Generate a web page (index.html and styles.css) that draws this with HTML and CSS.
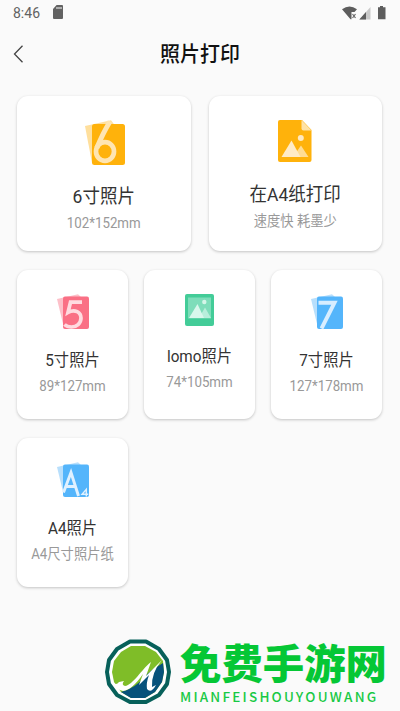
FILE: index.html
```html
<!DOCTYPE html>
<html lang="zh-CN">
<head>
<meta charset="utf-8">
<title>照片打印</title>
<link rel="stylesheet" href="styles.css">
</head>
<body>
<div class="status">
  <span class="time">8:46</span>
  <svg class="sd" width="10" height="14" viewBox="0 0 10 14"><path fill="#626262" fill-rule="evenodd" d="M3.6 0H9q1 0 1 1v12q0 1-1 1H1q-1 0-1-1V4zM3.5 2v2h1V2zm2 0v2h1V2zm2 0v2h1V2z"/></svg>
  <svg class="signals" width="45" height="15" viewBox="0 0 45 15">
    <path fill="#5d5d5d" d="M0 3.200Q7.500-2.200 15 3.200L12.500 6H9.500V13.200H8.500z"/>
    <path d="M10.500 8l3 4m0-4l-3 4" stroke="#666" stroke-width="1.200"/>
    <path fill="#c9c9c9" d="M17.300 13.500L28.500 1v12.500z"/><path fill="#5d5d5d" d="M17.300 13.500L24 6v7.500z"/>
    <path fill="#5d5d5d" d="M38 0h3v1.300h2.500v12H36V1.300h2z"/>
  </svg>
</div>
<header class="bar">
  <svg class="back" width="11" height="18" viewBox="0 0 11 18"><path d="M9.500.7L1.500 9l8 8.300" fill="none" stroke="#444" stroke-width="1.300"/></svg>
  <h1>照片打印</h1>
</header>
<main>
  <section class="row large">
    <article class="card six">
      <svg width="40" height="46" viewBox="0 0 40 46">
        <path fill="#ffdf9c" d="M0 6L26 .3l3 4L7 43z"/>
        <rect x="7" y="4" width="33" height="41" rx="2.500" fill="#ffb20b"/>
        <path d="M25 1.500Q18 13 11.800 28" fill="none" stroke="#ffe5b2" stroke-width="5"/>
        <ellipse cx="20" cy="31.500" rx="9" ry="9.300" fill="none" stroke="#ffe5b2" stroke-width="4.700"/>
      </svg>
      <h2>6寸照片</h2><p>102*152mm</p>
    </article>
    <article class="card sheet">
      <svg width="34" height="42" viewBox="0 0 34 42">
        <path fill="#ffb20b" d="M2 0H24L33.500 10V40q0 2-2 2H2q-2 0-2-2V2Q0 0 2 0z"/>
        <path fill="#ffe2a5" d="M23.500 0L33.500 10.500h-8q-2 0-2-2z"/>
        <circle cx="22.800" cy="18" r="3" fill="#ffe9bf"/>
        <path fill="#ffdc93" d="M15 37L23 25.500 30.500 37z"/><path fill="#ffebc6" d="M3.500 37L13.500 20.500 22.500 37z"/>
      </svg>
      <h2>在A4纸打印</h2><p>速度快 耗墨少</p>
    </article>
  </section>
  <section class="row small">
    <article class="card five">
      <svg width="33" height="36" viewBox="0 0 33 36">
        <path fill="#fdc0c9" d="M0 5L21 .3 24 3 7 34z"/><rect x="6" y="2.500" width="26" height="32.500" rx="2" fill="#fa7085"/>
        <path d="M25 8.200H13.500L11 18.500C18 14.500 24 18.500 24 24S19.500 33 14.500 33Q10 33 7.500 30.500" fill="none" stroke="#ffdbe0" stroke-width="3.700"/>
      </svg>
      <h2>5寸照片</h2><p>89*127mm</p>
    </article>
    <article class="card lomo">
      <svg width="29" height="32" viewBox="0 0 29 32">
        <rect width="29" height="32" rx="2" fill="#43cc98"/><rect x="3" y="3.500" width="23" height="21" fill="#7eddba"/>
        <circle cx="19.300" cy="8" r="2.200" fill="#d4f5e8"/>
        <path fill="#b8eedb" d="M14 24L20 13.500 26 24z"/><path fill="#d9f7ec" d="M4 24L12.500 10 19 24z"/>
      </svg>
      <h2>lomo照片</h2><p>74*105mm</p>
    </article>
    <article class="card seven">
      <svg width="33" height="36" viewBox="0 0 33 36">
        <path fill="#b8dffc" d="M0 5L21 .3 24 3 7 34z"/><rect x="6" y="2.500" width="26" height="32.500" rx="2" fill="#54b5fb"/>
        <path d="M7.500 8.700H23.500L10.500 34.500" fill="none" stroke="#d7edff" stroke-width="3.900"/>
      </svg>
      <h2>7寸照片</h2><p>127*178mm</p>
    </article>
    <article class="card afour">
      <svg width="33" height="36" viewBox="0 0 33 36">
        <path fill="#b8dffc" d="M0 5L21 .3 24 3 7 34z"/><rect x="6" y="2.500" width="26" height="32.500" rx="2" fill="#54b5fb"/>
        <path d="M6.500 30.500L14 10.500 21.500 34M9 24.500h9.500" fill="none" stroke="#e0f1ff" stroke-width="2.900"/>
        <path d="M29.300 34.500v-7.200l-4.300 5h6.300" fill="none" stroke="#e0f1ff" stroke-width="1.400"/>
      </svg>
      <h2>A4照片</h2><p>A4尺寸照片纸</p>
    </article>
  </section>
</main>
<footer class="brand">
  <svg width="68" height="66" viewBox="0 0 68 66">
    <path d="M26 2.500H42L55 10 63 21 65 33 63 45 55 56 42 63H26L13 56 5 45 3 33 5 21 13 10z" fill="#fff" stroke="#07605a" stroke-width="4" stroke-linejoin="round"/>
    <path d="M27 7H41L52 13 59 22 60 33 58 43 51 53 41 59H27L17 53 10 43 8 33 10 22 17 13z" fill="#7fbd28"/>
    <path d="M17 53Q32 49 41 37L48 31 59 24 60 33 58 43 51 53 41 59H27z" fill="#07527b"/>
    <path d="M9 43Q12 47 15 43L20 42Q17 46 21 47C29 46 37 31 47 23L42 37 58 21Q47 34 48 48L52 46Q47 55 43 50 42 44 45 36L35 46 39 35Q28 51 19 52 12 51 9 43z" fill="#fff"/>
  </svg>
  <div class="words"><div class="cn">免费手游网</div><div class="en">MIANFEISHOUYOUWANG</div></div>
</footer>
</body>
</html>
```

FILE: styles.css
```css
* { box-sizing: border-box; }
body {
  margin: 0;
  height: 711px;
  overflow: hidden;
  display: flex;
  flex-direction: column;
  background: #fafafa;
  font-family: Roboto, "Noto Sans CJK SC", sans-serif;
}
h1, h2, p { margin: 0; font-weight: 400; white-space: nowrap; }
svg { display: block; flex: none; }
.status { height: 26px; display: flex; align-items: center; padding: 0 13px; }
.time { width: 40px; font-size: 14px; line-height: 26px; color: #626262; }
.sd { margin-top: -2px; }
.signals { margin-left: auto; margin-right: 0; }
.bar { height: 56px; display: grid; grid-template-columns: 20px 1fr 20px; align-items: center; padding: 0 13px; }
.bar h1 { text-align: center; font-size: 20px; font-weight: 500; line-height: 30px; color: #111; transform: scaleY(1.05); }
main { padding: 14px 18px 0 17px; }
.row { display: grid; }
.large { grid-template-columns: 173.5px 173.5px; justify-content: space-between; }
.small { grid-template-columns: repeat(3, 111px); justify-content: space-between; row-gap: 19px; margin-top: 19px; }
.card {
  display: flex;
  flex-direction: column;
  align-items: center;
  background: #fff;
  border-radius: 11px;
  box-shadow: 0 1px 3px rgba(0, 0, 0, .22);
  color: #333;
}
.large .card { height: 155px; padding-top: 24px; }
.small .card { height: 149px; padding-top: 24px; }
.card h2 { font-size: 17.5px; line-height: 26px; margin-top: 18px; transform: scaleY(1.08); }
.card p { font-size: 13.3px; line-height: 20px; color: #999; margin-top: 4px; transform: scaleY(1.08); }
.six svg { margin-left: 3px; }
.sheet h2 { margin-top: 20px; }
.five svg, .seven svg, .afour svg { margin-left: 2px; }
.small h2 { font-size: 15.3px; line-height: 22px; margin-top: 20px; }
.small .card p { margin-top: 5px; }
.brand { margin: auto 0 0 104px; height: 72px; display: flex; align-items: flex-start; }
.words { margin-left: 8px; margin-top: -3px; }
.cn { font-family: "Noto Sans CJK SC", sans-serif; font-size: 41.4px; line-height: 50px; font-weight: 900; color: #05c735; white-space: nowrap; }
.en { font-family: "Noto Sans CJK SC", sans-serif; font-size: 13.5px; line-height: 16px; margin-top: 2px; font-weight: 500; letter-spacing: 2.2px; color: #18c944; white-space: nowrap; }
```
